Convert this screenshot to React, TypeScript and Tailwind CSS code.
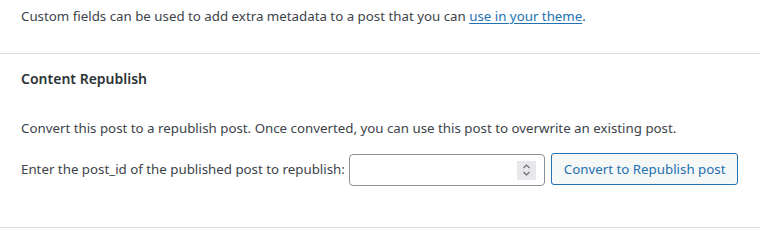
export default function App() {
  return (
    <div
      className="w-[760px] h-[244px] bg-white text-[13.3px] text-[#3c434a]"
      style={{ fontFamily: '"Noto Sans", "Open Sans", sans-serif' }}
    >
      <div className="h-[54px] border-b border-[#dcdcde] px-[21px] pt-[6px]">
        <p className="leading-[20px]">
          Custom fields can be used to add extra metadata to a post that you can{" "}
          <a href="#" className="text-[#2271b1] underline underline-offset-[2px]">
            use in your theme
          </a>
          .
        </p>
      </div>
      <div className="h-[174px] border-b border-[#dcdcde] px-[21px] pt-[15px]">
        <h2 className="text-[14px] font-semibold leading-[20px] text-[#2c3338]">Content Republish</h2>
        <p className="mt-[29px] leading-[20px]">
          Convert this post to a republish post. Once converted, you can use this post to overwrite an existing post.
        </p>
        <div className="mt-[13px] flex items-center">
          <label className="leading-[20px]">Enter the post_id of the published post to republish:</label>
          <div className="ml-[4px] mt-[3px] flex h-[32px] w-[196px] items-center justify-end rounded-[4px] border border-[#8c8f94] bg-white pr-[8px]">
            <div className="flex h-[19px] w-[19px] flex-col items-center justify-center bg-[#e8e8ec]">
              <svg width="9" height="14" viewBox="0 0 9 14" fill="none" stroke="#6b6b70" strokeWidth="1.2">
                <path d="M1.5 5 L4.5 2 L7.5 5" />
                <path d="M1.5 9 L4.5 12 L7.5 9" />
              </svg>
            </div>
          </div>
          <button className="ml-[6px] h-[32px] rounded-[3px] border border-[#2271b1] bg-[#f6f7f7] px-[12px] leading-[20px] text-[#2271b1]">
            Convert to Republish post
          </button>
        </div>
      </div>
    </div>
  );
}
